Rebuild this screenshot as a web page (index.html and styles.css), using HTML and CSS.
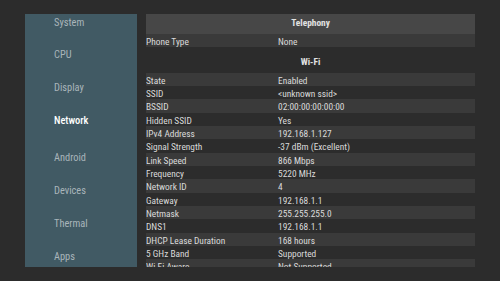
FILE: index.html
```html
<!DOCTYPE html>
<html>
<head>
    <title>Device Info</title>
    <link rel="stylesheet" href="styles.css">
</head>
<body>
    <div class="screen">
        <!-- Category menu -->
        <nav class="sidebar">
            <ul class="menu">
                <li>System</li>
                <li>CPU</li>
                <li>Display</li>
                <li class="active">Network</li>
                <li>Android</li>
                <li>Devices</li>
                <li>Thermal</li>
                <li>Apps</li>
            </ul>
        </nav>

        <!-- Details -->
        <div class="details">
            <div class="section-title filled">Telephony</div>
            <div class="row odd"><span class="key">Phone Type</span><span class="val">None</span></div>

            <div class="section-title spaced">Wi-Fi</div>
            <div class="row odd"><span class="key">State</span><span class="val">Enabled</span></div>
            <div class="row"><span class="key">SSID</span><span class="val">&lt;unknown ssid&gt;</span></div>
            <div class="row odd"><span class="key">BSSID</span><span class="val">02:00:00:00:00:00</span></div>
            <div class="row"><span class="key">Hidden SSID</span><span class="val">Yes</span></div>
            <div class="row odd"><span class="key">IPv4 Address</span><span class="val">192.168.1.127</span></div>
            <div class="row"><span class="key">Signal Strength</span><span class="val">-37 dBm (Excellent)</span></div>
            <div class="row odd"><span class="key">Link Speed</span><span class="val">866 Mbps</span></div>
            <div class="row"><span class="key">Frequency</span><span class="val">5220 MHz</span></div>
            <div class="row odd"><span class="key">Network ID</span><span class="val">4</span></div>
            <div class="row"><span class="key">Gateway</span><span class="val">192.168.1.1</span></div>
            <div class="row odd"><span class="key">Netmask</span><span class="val">255.255.255.0</span></div>
            <div class="row"><span class="key">DNS1</span><span class="val">192.168.1.1</span></div>
            <div class="row odd"><span class="key">DHCP Lease Duration</span><span class="val">168 hours</span></div>
            <div class="row"><span class="key">5 GHz Band</span><span class="val">Supported</span></div>
            <div class="row odd"><span class="key">Wi-Fi Aware</span><span class="val">Not Supported</span></div>
        </div>
    </div>
</body>
</html>
```
FILE: styles.css
```css
body {
    margin: 0;
    background: #2c2c2c;
    font-family: "Roboto Condensed", Roboto, "Liberation Sans", sans-serif;
}

.screen {
    display: flex;
    gap: 9px;
    padding: 14px 25px;
    height: 253px;
}

.sidebar {
    width: 112px;
    height: 253px;
    background: #415a64;
    overflow: hidden;
}

.menu {
    list-style: none;
    margin: -7.5px 0 0 0;
    padding: 0;
}

.menu li {
    height: 32.9px;
    line-height: 32.9px;
    padding-left: 29px;
    font-size: 10.4px;
    color: #a9b5ba;
}

.menu li.active {
    color: #ffffff;
    font-weight: 500;
    margin-bottom: 4px;
}

.details {
    width: 329px;
    height: 253px;
    overflow: hidden;
    font-size: 9.4px;
}

.section-title {
    height: 17px;
    line-height: 17px;
    padding-bottom: 3px;
    text-align: center;
    font-weight: bold;
    color: #e2e2e2;
}

.section-title.filled {
    background: #474747;
}

.section-title.spaced {
    margin-top: 5.33px;
}

.row {
    display: flex;
    height: 11.33px;
    line-height: 11.33px;
    padding-top: 2px;
    color: #dadada;
}

.row.odd {
    background: #3a3a3a;
}

.key {
    width: 132px;
    white-space: nowrap;
}

.val {
    white-space: nowrap;
}
```
